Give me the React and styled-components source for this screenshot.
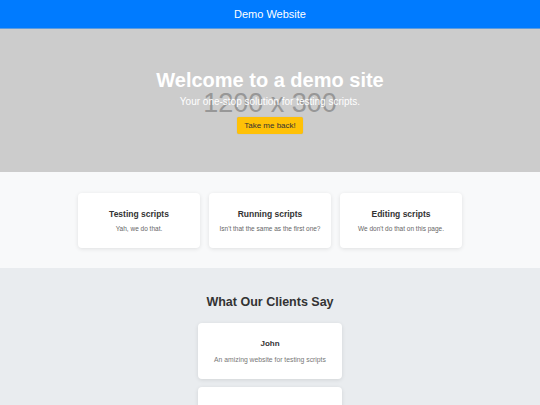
import React from "react";
import styled, { createGlobalStyle } from "styled-components";

const features = [
    { title: "Testing scripts", text: "Yah, we do that." },
    { title: "Running scripts", text: "Isn't that the same as the first one?" },
    { title: "Editing scripts", text: "We don't do that on this page." },
];

const testimonials = [
    { name: "John", text: "An amizing website for testing scripts" },
    { name: "Jane", text: "I love the way it runs every script" },
];

const App = () => {
    return (
        <>
            <GlobalStyle />
            <Header>Demo Website</Header>
            <Hero>
                <Placeholder>1200 x 300</Placeholder>
                <HeroTitle>Welcome to a demo site</HeroTitle>
                <HeroText>Your one-stop solution for testing scripts.</HeroText>
                <BackButton>Take me back!</BackButton>
            </Hero>
            <Features>
                {features.map(item => (
                    <FeatureCard key={item.title}>
                        <CardTitle>{item.title}</CardTitle>
                        <CardText>{item.text}</CardText>
                    </FeatureCard>
                ))}
            </Features>
            <Testimonials>
                <SectionTitle>What Our Clients Say</SectionTitle>
                {testimonials.map(item => (
                    <TestimonialCard key={item.name}>
                        <Name>{item.name}</Name>
                        <Quote>{item.text}</Quote>
                    </TestimonialCard>
                ))}
            </Testimonials>
        </>
    );
}

export default App;


const GlobalStyle = createGlobalStyle`
    body {
        margin: 0;
        font-family: "Liberation Sans", Arial, sans-serif;
        background: #e9ecef;
        color: #333;
    }
`

const Header = styled.header`
    height: 28px;
    background: #007bff;
    color: #fff;
    font-size: 11px;
    display: flex;
    align-items: center;
    justify-content: center;
    border-bottom: 1px solid #5a9be0;
`

const Hero = styled.section`
    position: relative;
    height: 143px;
    background: #cccccc;
    display: flex;
    flex-direction: column;
    align-items: center;
    justify-content: center;
    overflow: hidden;
`

const Placeholder = styled.div`
    position: absolute;
    top: 59px;
    left: 0;
    right: 0;
    text-align: center;
    font-size: 27px;
    line-height: 30px;
    color: #979797;
`

const HeroTitle = styled.h1`
    position: relative;
    margin: 0;
    font-size: 20px;
    line-height: 24px;
    font-weight: bold;
    color: #fff;
`

const HeroText = styled.p`
    position: relative;
    margin: 0 0 5px;
    font-size: 10px;
    line-height: 20px;
    color: #fff;
`

const BackButton = styled.button`
    position: relative;
    width: 66px;
    height: 17px;
    padding: 0;
    border: none;
    border-radius: 2px;
    background: #ffc107;
    color: #333;
    font-family: inherit;
    font-size: 8px;
    box-shadow: 0 0 1px rgba(0, 0, 0, 0.2);
`

const Features = styled.section`
    background: #f8f9fa;
    padding: 21px 0 20px;
    display: flex;
    justify-content: center;
    gap: 9px;
`

const FeatureCard = styled.div`
    width: 122px;
    height: 55px;
    box-sizing: border-box;
    background: #fff;
    border-radius: 4px;
    box-shadow: 0 1px 4px rgba(0, 0, 0, 0.1);
    display: flex;
    flex-direction: column;
    align-items: center;
    justify-content: center;
    gap: 6px;
`

const CardTitle = styled.h3`
    margin: 0;
    font-size: 8.5px;
    font-weight: bold;
    color: #333;
`

const CardText = styled.p`
    margin: 0;
    font-size: 6.5px;
    color: #666;
`

const Testimonials = styled.section`
    padding: 26px 0 20px;
    display: flex;
    flex-direction: column;
    align-items: center;
    gap: 8px;
`

const SectionTitle = styled.h2`
    margin: 0 0 5px;
    font-size: 12.5px;
    line-height: 16px;
    font-weight: bold;
    color: #333;
`

const TestimonialCard = styled.div`
    width: 144px;
    height: 56px;
    flex-shrink: 0;
    background: #fff;
    border-radius: 4px;
    box-shadow: 0 1px 4px rgba(0, 0, 0, 0.1);
    display: flex;
    flex-direction: column;
    align-items: center;
    justify-content: center;
    gap: 8px;
`

const Name = styled.h4`
    margin: 0;
    font-size: 8px;
    font-weight: bold;
    color: #333;
`

const Quote = styled.p`
    margin: 0;
    font-size: 6.8px;
    color: #777;
`
